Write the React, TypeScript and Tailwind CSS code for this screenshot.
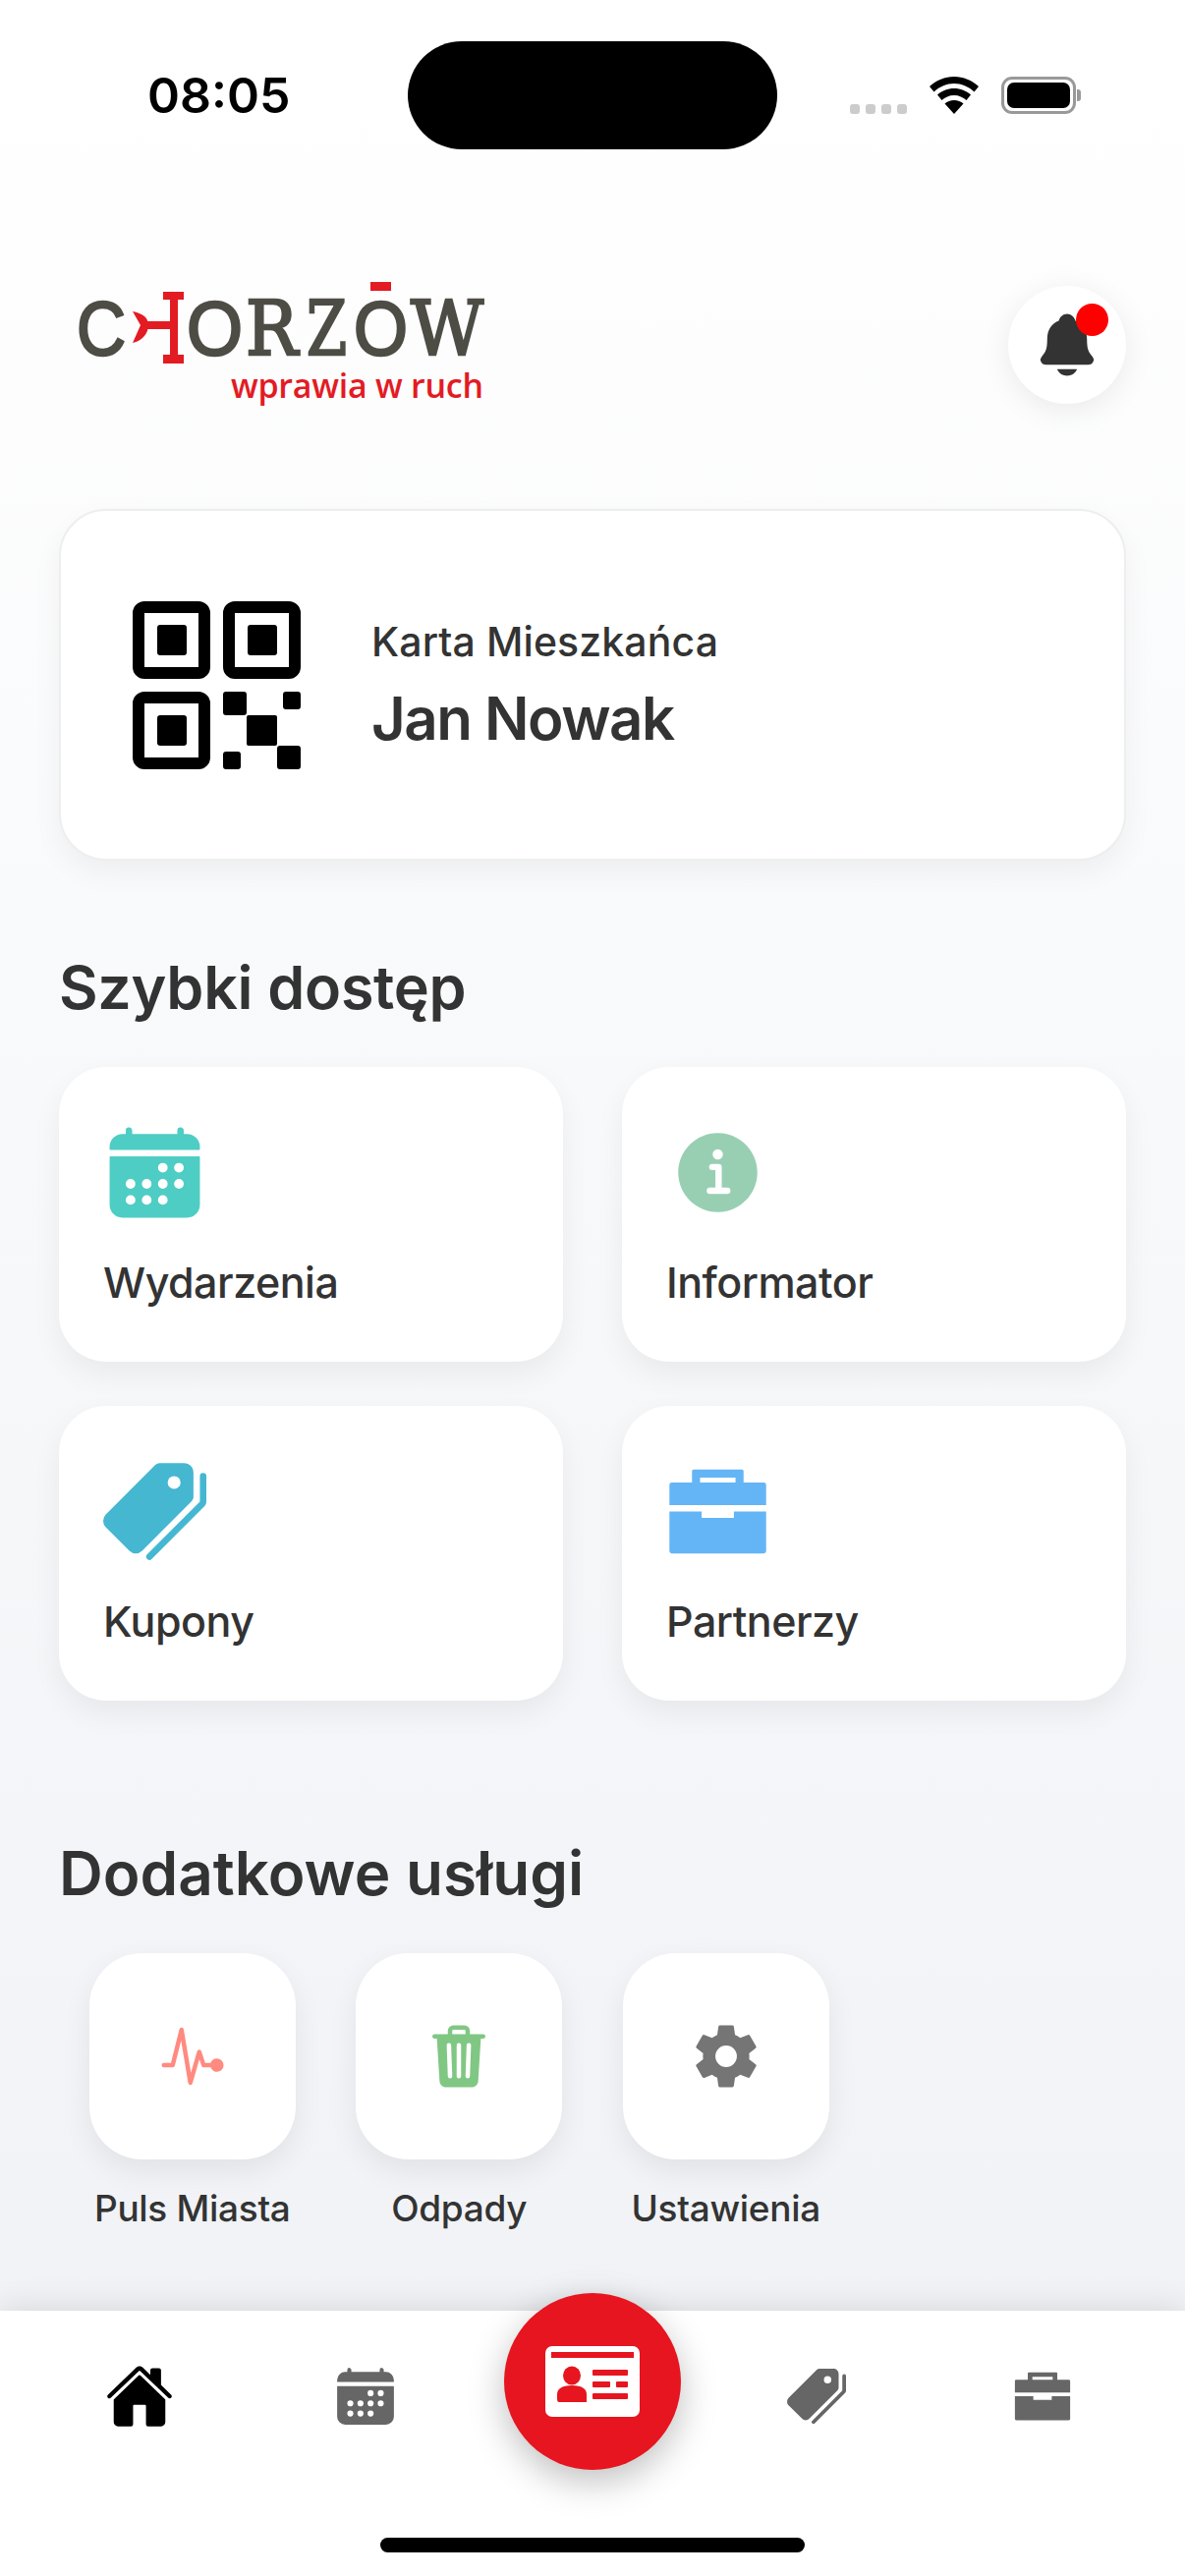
import React from "react";
import { IoNotifications, IoCalendar, IoInformationCircle, IoPricetags, IoBriefcaseSharp, IoPulse, IoTrash, IoSettingsSharp, IoHome } from "react-icons/io5";

const font = { fontFamily: 'Inter, "Noto Sans", sans-serif' };

function Logo() {
  const round = { fontFamily: '"Liberation Sans", sans-serif', fontSize: 78 };
  const slab = { fontFamily: '"DejaVu Serif", serif', fontSize: 76 };
  const letters: [string, number, number, object][] = [
    ["C", 1, 50, round],
    ["O", 113, 57, round],
    ["R", 173, 53, slab],
    ["Z", 235, 41, slab],
    ["O", 283, 55, round],
    ["W", 341, 74, slab],
  ];
  return (
    <svg width="420" height="130" viewBox="0 0 420 130" role="img" aria-label="Chorzów wprawia w ruch">
      {letters.map(([c, x, w, f], i) => (
        <text key={i} x={x} y={76} textLength={w} lengthAdjust="spacingAndGlyphs" fill="#4d4d46" stroke="#4d4d46" strokeWidth="2.5" {...f}>{c}</text>
      ))}
      <rect x="89" y="12" width="21" height="8" fill="#e31b23" />
      <rect x="89" y="76" width="21" height="9" fill="#e31b23" />
      <rect x="96" y="12" width="8" height="73" fill="#e31b23" />
      <rect x="70" y="42" width="27" height="8" fill="#e31b23" />
      <path d="M58 32 C68 34 74 38 74 46 C74 54 68 62 58 64 L 66 46 Z" fill="#e31b23" />
      <rect x="300" y="2" width="21" height="9" fill="#e31b23" />
      <text x="158" y="120" textLength="257" lengthAdjust="spacing" fill="#e31b23" style={{ fontFamily: '"Open Sans", sans-serif', fontWeight: 600, fontSize: 34 }}>wprawia w ruch</text>
    </svg>
  );
}

function QrIcon() {
  const finder = (x: number, y: number) => (
    <g key={`${x}-${y}`}>
      <rect x={x + 6} y={y + 6} width="67" height="67" rx="6" fill="none" stroke="black" strokeWidth="12" />
      <rect x={x + 25} y={y + 24} width="30" height="31" rx="3" fill="black" />
    </g>
  );
  return (
    <svg width="171" height="171" viewBox="0 0 171 171" className="shrink-0">
      {finder(0, 0)}
      {finder(92, 0)}
      {finder(0, 92)}
      <rect x="92" y="92" width="24" height="24" rx="3" />
      <rect x="153" y="92" width="18" height="18" rx="3" />
      <rect x="116" y="116" width="31" height="31" rx="2" />
      <rect x="92" y="153" width="18" height="18" rx="3" />
      <rect x="147" y="147" width="24" height="24" rx="3" />
    </svg>
  );
}

function StatusBar() {
  return (
    <div className="flex items-start h-[225px] pt-[42px] pl-[150px] pr-[106px]">
      <div className="w-[265px] pt-[29px] text-[50px] leading-[52px] font-semibold text-black" style={font}>08:05</div>
      <div className="w-[376px] h-[110px] rounded-[55px] bg-black" />
      <div className="flex-1 flex items-start pl-[74px] pt-[36px]">
        <div className="flex gap-[6px] mt-[28px]">
          <span className="w-[10px] h-[10px] rounded-[3px] bg-[#cccccc]" />
          <span className="w-[10px] h-[10px] rounded-[3px] bg-[#cccccc]" />
          <span className="w-[10px] h-[10px] rounded-[3px] bg-[#cccccc]" />
          <span className="w-[10px] h-[10px] rounded-[3px] bg-[#cccccc]" />
        </div>
        <svg className="ml-[23px]" width="50" height="38" viewBox="0 0 50 38">
          <path d="M25 0C15.500 0 7 3.800 0 10l4.500 5.500C10.500 10 17.500 7 25 7s14.500 3 20.500 8.500L50 10C43 3.800 34.500 0 25 0z" />
          <path d="M25 12c-6.500 0-12.500 2.500-17 6.500l4.500 5.500c3.300-3 7.500-5 12.500-5s9.200 2 12.500 5l4.500-5.500C37.500 14.500 31.500 12 25 12z" />
          <path d="M25 24c-3.700 0-7 1.300-9.500 3.500L25 38l9.500-10.500C32 25.300 28.700 24 25 24z" />
        </svg>
        <div className="ml-[23px] flex items-center">
          <div className="w-[76px] h-[38px] rounded-[11px] border-[3px] border-[#999999] p-[3px]">
            <div className="w-full h-full rounded-[7px] bg-black" />
          </div>
          <div className="w-[4px] h-[12px] rounded-r-[3px] bg-[#999999] ml-[1px]" />
        </div>
      </div>
    </div>
  );
}

function Header() {
  return (
    <div className="flex items-start justify-between pl-[77px] pr-[60px] mt-[60px]">
      <Logo />
      <div className="relative w-[120px] h-[120px] mt-[6px] rounded-full bg-white flex items-center justify-center shadow-[0_6px_30px_rgba(0,0,0,0.08)]">
        <IoNotifications className="w-[72px] h-[72px] text-[#333333]" />
        <span className="absolute left-[69px] top-[18px] w-[33px] h-[33px] rounded-full bg-[#ff0000]" />
      </div>
    </div>
  );
}

function QuickCard({ icon, label }: { icon: React.ReactNode; label: string }) {
  return (
    <div className="h-[300px] rounded-[48px] bg-white pl-[45px] pt-[55px] shadow-[0_12px_30px_rgba(0,0,0,0.06)]">
      <div className="w-[105px] h-[105px] flex items-center justify-center">{icon}</div>
      <div className="mt-[29px] text-[43px] leading-[60px] font-medium tracking-[-0.5px] text-[#333333]" style={font}>{label}</div>
    </div>
  );
}

function SmallCard({ icon, label }: { icon: React.ReactNode; label: string }) {
  return (
    <div className="flex flex-col items-center">
      <div className="w-[210px] h-[210px] rounded-[54px] bg-white flex items-center justify-center shadow-[0_12px_30px_rgba(0,0,0,0.07)]">{icon}</div>
      <div className="mt-[25px] text-[37px] leading-[50px] font-medium tracking-[-0.3px] text-[#333333]" style={font}>{label}</div>
    </div>
  );
}

function IdCardIcon() {
  return (
    <svg width="96" height="72" viewBox="0 0 96 72">
      <rect width="96" height="72" rx="7" fill="white" />
      <rect x="6" y="6" width="84" height="6" fill="#e6151f" />
      <ellipse cx="27" cy="30" rx="9" ry="9.500" fill="#e6151f" />
      <path d="M12 49C12 44 16 40 27 40C38 40 42 44 42 49V57H14Q12 57 12 54Z" fill="#e6151f" />
      <rect x="48" y="24" width="36" height="6" rx="1" fill="#e6151f" />
      <rect x="48" y="36" width="18" height="6" rx="1" fill="#e6151f" />
      <rect x="72" y="36" width="12" height="6" rx="1" fill="#e6151f" />
      <rect x="48" y="48" width="36" height="6" rx="1" fill="#e6151f" />
    </svg>
  );
}

function BottomNav() {
  return (
    <div className="relative mt-auto h-[270px] bg-white shadow-[0_-4px_30px_rgba(0,0,0,0.1)]">
      <div className="grid grid-cols-5 items-center pl-[27px] pr-[30px] pt-[52px]">
        <div className="flex justify-center"><IoHome className="w-[70px] h-[70px] text-black" /></div>
        <div className="flex justify-center"><IoCalendar className="w-[66px] h-[66px] text-[#666666]" /></div>
        <div />
        <div className="flex justify-center"><IoPricetags className="w-[60px] h-[60px] text-[#666666]" /></div>
        <div className="flex justify-center"><IoBriefcaseSharp className="w-[60px] h-[60px] text-[#666666]" /></div>
      </div>
      <div className="absolute left-[513px] -top-[18px] w-[180px] h-[180px] rounded-full bg-[#e6151f] flex items-center justify-center shadow-[0_12px_36px_rgba(0,0,0,0.25)]">
        <IdCardIcon />
      </div>
      <div className="absolute left-[387px] top-[231px] w-[432px] h-[15px] rounded-full bg-black" />
    </div>
  );
}

export default function App() {
  return (
    <div className="w-[1206px] h-[2622px] flex flex-col overflow-hidden bg-gradient-to-b from-white to-[#eff1f5]" style={font}>
      <StatusBar />
      <Header />
      <div className="px-[60px]">
        <div className="mt-[103px] h-[358px] rounded-[48px] bg-white border-2 border-[#eeeeee] flex items-center pl-[73px] shadow-[0_12px_30px_rgba(0,0,0,0.05)]">
          <QrIcon />
          <div className="ml-[72px]">
            <div className="text-[41px] leading-[56px] font-medium tracking-[0.1px] text-[#333333]">Karta Mieszkańca</div>
            <div className="mt-[12px] text-[60px] leading-[76px] font-semibold tracking-[-1.5px] text-[#333333]">Jan Nowak</div>
          </div>
        </div>
        <h2 className="mt-[89px] text-[61px] leading-[80px] font-semibold tracking-[-0.3px] text-[#333333]">Szybki dostęp</h2>
        <div className="mt-[41px] grid grid-cols-2 gap-x-[60px] gap-y-[45px]">
          <QuickCard label="Wydarzenia" icon={<IoCalendar className="w-[105px] h-[105px] text-[#4ecdc4]" />} />
          <QuickCard label="Informator" icon={<IoInformationCircle className="w-[103px] h-[103px] text-[#98cfb3]" />} />
          <QuickCard label="Kupony" icon={<IoPricetags className="w-[105px] h-[105px] text-[#45b7d1]" />} />
          <QuickCard label="Partnerzy" icon={<IoBriefcaseSharp className="w-[105px] h-[105px] text-[#64b5f6]" />} />
        </div>
        <h2 className="mt-[136px] text-[62px] leading-[80px] font-semibold text-[#333333]">Dodatkowe usługi</h2>
        <div className="mt-[41px] grid grid-cols-4">
          <SmallCard label="Puls Miasta" icon={<IoPulse className="w-[72px] h-[72px] text-[#ff8a80]" />} />
          <SmallCard label="Odpady" icon={<IoTrash className="w-[72px] h-[72px] text-[#81c784]" />} />
          <SmallCard label="Ustawienia" icon={<IoSettingsSharp className="w-[70px] h-[70px] text-[#757575]" />} />
        </div>
      </div>
      <BottomNav />
    </div>
  );
}
